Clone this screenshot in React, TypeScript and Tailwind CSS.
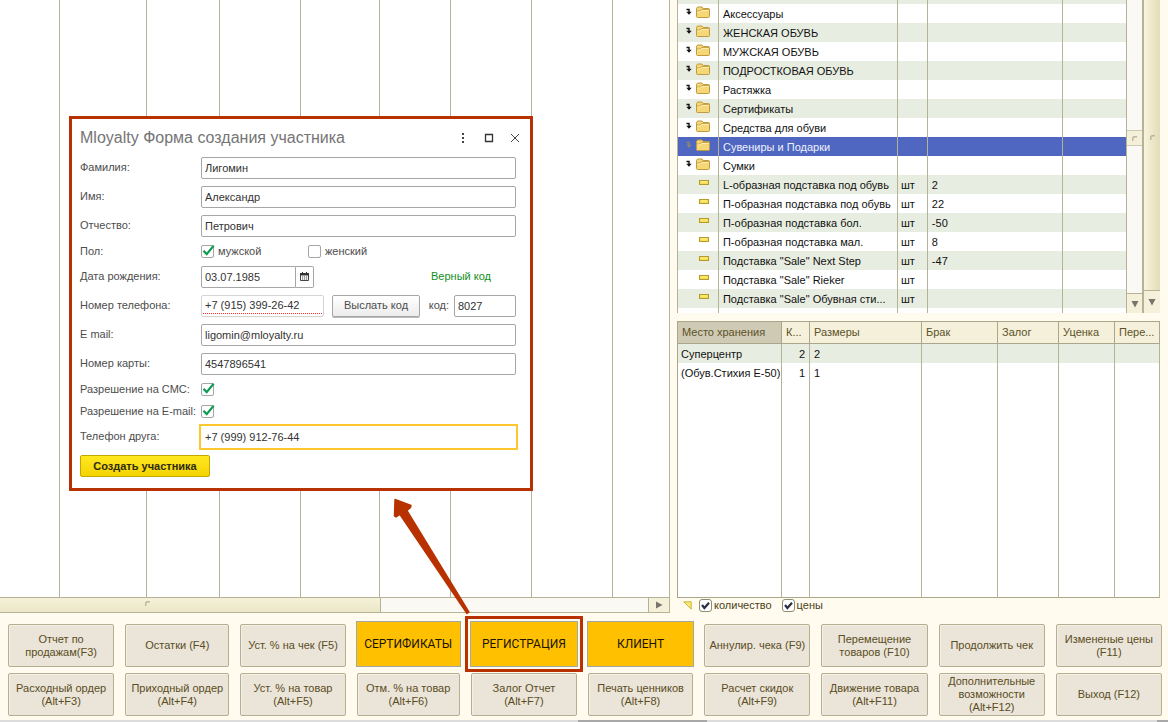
import type { ReactNode } from "react";
import { clsx } from "clsx";

type Product = {
  name: string;
  folder?: boolean;
  selected?: boolean;
  unit?: string;
  qty?: string;
};

const products: Product[] = [
  { name: "Аксессуары", folder: true },
  { name: "ЖЕНСКАЯ ОБУВЬ", folder: true },
  { name: "МУЖСКАЯ ОБУВЬ", folder: true },
  { name: "ПОДРОСТКОВАЯ ОБУВЬ", folder: true },
  { name: "Растяжка", folder: true },
  { name: "Сертификаты", folder: true },
  { name: "Средства для обуви", folder: true },
  { name: "Сувениры и Подарки", folder: true, selected: true },
  { name: "Сумки", folder: true },
  { name: "L-образная подставка под обувь", unit: "шт", qty: "2" },
  { name: "П-образная подставка под обувь", unit: "шт", qty: "22" },
  { name: "П-образная подставка бол.", unit: "шт", qty: "-50" },
  { name: "П-образная подставка мал.", unit: "шт", qty: "8" },
  { name: 'Подставка "Sale" Next Step', unit: "шт", qty: "-47" },
  { name: 'Подставка "Sale" Rieker', unit: "шт" },
  { name: 'Подставка "Sale" Обувная сти...', unit: "шт" },
];

const stockHead = ["Место хранения", "К...", "Размеры", "Брак", "Залог", "Уценка", "Пере..."];

const stock = [
  { place: "Суперцентр", count: "2", sizes: "2" },
  { place: "(Обув.Стихия Е-50)", count: "1", sizes: "1" },
];

type Action = { lines: string[]; accent?: boolean; marked?: boolean };

const actions: Action[] = [
  { lines: ["Отчет по", "продажам(F3)"] },
  { lines: ["Остатки (F4)"] },
  { lines: ["Уст. % на чек (F5)"] },
  { lines: ["СЕРТИФИКАТЫ"], accent: true },
  { lines: ["РЕГИСТРАЦИЯ"], accent: true, marked: true },
  { lines: ["КЛИЕНТ"], accent: true },
  { lines: ["Аннулир. чека (F9)"] },
  { lines: ["Перемещение", "товаров (F10)"] },
  { lines: ["Продолжить чек"] },
  { lines: ["Измененые цены", "(F11)"] },
  { lines: ["Расходный ордер", "(Alt+F3)"] },
  { lines: ["Приходный ордер", "(Alt+F4)"] },
  { lines: ["Уст. % на товар", "(Alt+F5)"] },
  { lines: ["Отм. % на товар", "(Alt+F6)"] },
  { lines: ["Залог Отчет", "(Alt+F7)"] },
  { lines: ["Печать ценников", "(Alt+F8)"] },
  { lines: ["Расчет скидок", "(Alt+F9)"] },
  { lines: ["Движение товара", "(Alt+F11)"] },
  { lines: ["Дополнительные", "возможности", "(Alt+F12)"] },
  { lines: ["Выход (F12)"] },
];

const FIELD =
  "h-[22px] min-w-0 rounded-[2px] border border-[#a6a6a6] bg-white px-[3px] text-[11px] text-[#333] outline-none";

const CELL = "border-r border-[#b5b296] p-0 pt-0.5 leading-[17px] whitespace-nowrap";

function FolderIcon({ dim }: { dim?: boolean }) {
  return (
    <svg width="26" height="15" viewBox="0 0 26 15" className="-mt-1 ml-[7px] block" aria-hidden>
      <path
        d="M1.500 5.500h2.500v3"
        fill="none"
        stroke={dim ? "#8d8676" : "#111"}
        strokeWidth="1.4"
      />
      <path d="M1.300 7.800h5.400L4 10.800z" fill={dim ? "#8d8676" : "#111"} />
      <path
        d="M11.5 4.5l1-1.5h4.5l1.2 1.5h5.3q1 0 1 1v7q0 1-1 1h-11q-1 0-1-1z"
        fill="#f6d778"
        stroke="#c09a3e"
        strokeWidth="1"
      />
      <path d="M12 7h3l1.4-1.5H24" fill="none" stroke="#c9a54c" strokeWidth="1" />
      <path d="M12.5 8h3l1.3-1.5H23.5" fill="none" stroke="#fdeeb0" strokeWidth="1" />
    </svg>
  );
}

function ItemIcon() {
  return (
    <svg width="10" height="5" viewBox="0 0 10 5" className="-mt-1 ml-[21px] block" aria-hidden>
      <rect x="0.5" y="0.5" width="9" height="4" fill="#f7dd4c" stroke="#b79a2c" />
      <path d="M2 2h6" stroke="#fdf3a0" />
    </svg>
  );
}

function Arrow({ dir }: { dir: "down" | "right" }) {
  return (
    <svg width="8" height="8" viewBox="0 0 8 8" aria-hidden>
      <path d={dir === "down" ? "M0.5 1h7L4 7.5z" : "M1 0.5v7L7.5 4z"} fill="#77756b" />
    </svg>
  );
}

function Grip() {
  return (
    <svg width="5" height="5" viewBox="0 0 5 5" aria-hidden>
      <path d="M0.8 5V2.5q0-1.7 1.7-1.7H5" fill="none" stroke="#b9b59a" strokeWidth="1.4" />
    </svg>
  );
}

function ProductTable() {
  return (
    <table className="min-w-0 flex-1 table-fixed border-collapse border-l border-[#b5b296] bg-white text-[11px] text-[#111]">
      <colgroup>
        <col className="w-[41px]" />
        <col className="w-[179px]" />
        <col className="w-[30px]" />
        <col className="w-[136px]" />
        <col className="w-[64px]" />
      </colgroup>
      <tbody>
        <tr className="h-1 bg-[#e8ede1]">
          {[0, 1, 2, 3, 4].map((i) => (
            <td key={i} className="border-r border-[#b5b296] p-0" />
          ))}
        </tr>
        {products.map((p, i) => (
          <tr
            key={p.name}
            className={clsx(
              "h-[19px]",
              p.selected ? "bg-[#4f67c0] text-[#eef1ff]" : i % 2 ? "bg-[#e8ede1]" : "bg-white"
            )}
          >
            <td className="border-r border-[#b5b296] p-0">
              {p.folder ? <FolderIcon dim={p.selected} /> : <ItemIcon />}
            </td>
            <td className={clsx(CELL, "pl-1")}>{p.name}</td>
            <td className={clsx(CELL, "pl-[3px]")}>{p.unit}</td>
            <td className={clsx(CELL, "pl-1")}>{p.qty}</td>
            <td className={CELL} />
          </tr>
        ))}
        <tr className="h-[5px]">
          {[0, 1, 2, 3, 4].map((i) => (
            <td key={i} className="border-r border-[#b5b296] p-0" />
          ))}
        </tr>
      </tbody>
    </table>
  );
}

function StockTable() {
  return (
    <table className="h-full w-full table-fixed border-collapse border border-[#a9a68a] bg-white text-[11px] text-[#111]">
      <colgroup>
        <col className="w-[104px]" />
        <col className="w-[28px]" />
        <col className="w-[112px]" />
        <col className="w-[76px]" />
        <col className="w-[61px]" />
        <col className="w-[56px]" />
        <col />
      </colgroup>
      <thead>
        <tr className="h-[22px] text-left text-[#5b5029]">
          {stockHead.map((h, i) => (
            <th
              key={h}
              className={clsx(
                "border border-[#a9a68a] p-0 pl-1 font-normal whitespace-nowrap",
                i === 0 ? "bg-[#cfcab3]" : "bg-[#f4f0da]"
              )}
            >
              {h}
            </th>
          ))}
        </tr>
      </thead>
      <tbody>
        {stock.map((s, i) => (
          <tr key={s.place} className={clsx("h-[19px]", i === 0 && "bg-[#e8ede1]")}>
            <td className={clsx(CELL, "pl-[3px]")}>{s.place}</td>
            <td className={clsx(CELL, "pr-1 text-right")}>{s.count}</td>
            <td className={clsx(CELL, "pl-1")}>{s.sizes}</td>
            {[3, 4, 5, 6].map((c) => (
              <td key={c} className={CELL} />
            ))}
          </tr>
        ))}
        <tr>
          {stockHead.map((h) => (
            <td key={h} className={CELL} />
          ))}
        </tr>
      </tbody>
    </table>
  );
}

function ReceiptGrid() {
  return (
    <section className="flex min-w-0 flex-1 flex-col border-r border-[#b5b296]">
      <div className="grid flex-1 grid-cols-[60fr_87fr_73fr_81fr_80fr_71fr_81fr_81fr_56fr] divide-x divide-[#b5b296] bg-white">
        {[0, 1, 2, 3, 4, 5, 6, 7, 8].map((c) => (
          <div key={c} />
        ))}
      </div>
      <div className="flex h-4 border-y border-[#b5b296] bg-[#faf9f3]">
        <div className="flex w-[57%] items-center justify-center border-r border-[#b5b296] bg-linear-to-b from-[#f6f2da] to-[#ebe6c6]">
          <div className="-mt-1 w-[90px]">
            <Grip />
          </div>
        </div>
        <div className="flex-1" />
        <button
          type="button"
          aria-label="Прокрутить вправо"
          className="flex w-[21px] items-center justify-center border-l border-[#b5b296] bg-[#f4f0da]"
        >
          <Arrow dir="right" />
        </button>
      </div>
    </section>
  );
}

function GreenCheck({ id, children }: { id: string; children?: ReactNode }) {
  return (
    <span className="flex items-center gap-1">
      <span className="relative flex">
        <input
          id={id}
          type="checkbox"
          defaultChecked={id !== "female"}
          className="peer size-[13px] appearance-none rounded-[2px] border border-[#a6a6a6] bg-white"
        />
        <svg
          width="14"
          height="14"
          viewBox="0 0 14 14"
          className="pointer-events-none absolute -top-px left-0 hidden peer-checked:block"
          aria-hidden
        >
          <path d="M2.5 6.8l3.2 3.4 7-8.6" fill="none" stroke="#0b9a50" strokeWidth="2.2" />
        </svg>
      </span>
      {children}
    </span>
  );
}

function DarkCheck({ id, label }: { id: string; label: string }) {
  return (
    <span className="flex items-center">
      <span className="relative flex">
        <input
          id={id}
          type="checkbox"
          defaultChecked
          className="peer size-[13px] appearance-none rounded-[3px] border border-[#8f8c72] bg-white"
        />
        <svg
          width="13"
          height="13"
          viewBox="0 0 13 13"
          className="pointer-events-none absolute top-0 left-0 hidden peer-checked:block"
          aria-hidden
        >
          <path d="M3 6l2.4 3L10 3.8" fill="none" stroke="#2c2f45" strokeWidth="2.2" />
        </svg>
      </span>
      <label htmlFor={id} className="pl-0.5">
        {label}
      </label>
    </span>
  );
}

function Row({
  id,
  label,
  compact,
  children,
}: {
  id?: string;
  label: string;
  compact?: boolean;
  children: ReactNode;
}) {
  return (
    <div className={clsx("flex items-center", compact ? "h-[22px]" : "h-[29px]")}>
      <label htmlFor={id} className="w-[121px] shrink-0 whitespace-nowrap">
        {label}
      </label>
      <div className="flex min-w-0 flex-1 items-center">{children}</div>
    </div>
  );
}

function MemberDialog() {
  return (
    <form
      role="dialog"
      aria-labelledby="member-title"
      className="absolute top-[116px] left-[69px] w-[464px] border-3 border-[#b83200] bg-white pr-[14px] pb-[7px] pl-2 text-[11px] text-[#4d4d4d]"
    >
      <div className="flex h-[34px] items-center justify-between pt-1">
        <h1 id="member-title" className="text-[16px] text-[#757575]">
          Mloyalty Форма создания участника
        </h1>
        <div className="-mr-[5px] flex items-center gap-[14px]">
          <button type="button" aria-label="Меню">
            <svg width="12" height="12" viewBox="0 0 12 12" fill="#444" aria-hidden>
              <path d="M5 1h2v2H5zM5 5h2v2H5zM5 9h2v2H5z" />
            </svg>
          </button>
          <button type="button" aria-label="Развернуть">
            <svg width="12" height="12" viewBox="0 0 12 12" fill="none" stroke="#333" aria-hidden>
              <path d="M2.5 2.500h7v7h-7z" strokeWidth="1.3" />
            </svg>
          </button>
          <button type="button" aria-label="Закрыть">
            <svg width="12" height="12" viewBox="0 0 12 12" fill="none" stroke="#444" aria-hidden>
              <path d="M2 2l8 8M10 2l-8 8" />
            </svg>
          </button>
        </div>
      </div>

      <Row id="surname" label="Фамилия:">
        <input id="surname" defaultValue="Лигомин" className={clsx(FIELD, "flex-1")} />
      </Row>
      <Row id="name" label="Имя:">
        <input id="name" defaultValue="Александр" className={clsx(FIELD, "flex-1")} />
      </Row>
      <Row id="patronymic" label="Отчество:">
        <input id="patronymic" defaultValue="Петрович" className={clsx(FIELD, "flex-1")} />
      </Row>
      <Row id="male" label="Пол:" compact>
        <div className="w-[107px]">
          <GreenCheck id="male">
            <label htmlFor="male">мужской</label>
          </GreenCheck>
        </div>
        <GreenCheck id="female">
          <label htmlFor="female">женский</label>
        </GreenCheck>
      </Row>
      <Row id="birthday" label="Дата рождения:">
        <input
          id="birthday"
          defaultValue="03.07.1985"
          className={clsx(FIELD, "w-[95px] rounded-r-none")}
        />
        <button
          type="button"
          aria-label="Календарь"
          className="flex h-[22px] w-[18px] items-center justify-center rounded-r-[2px] border border-l-0 border-[#a6a6a6]"
        >
          <svg width="9" height="9" viewBox="0 0 9 9" aria-hidden>
            <path d="M0.5 1.5h8v7h-8z" fill="#fff" stroke="#444" />
            <path d="M0 1h9v2.5H0zM2 0h1v1H2zM6 0h1v1H6z" fill="#333" />
            <path d="M2 5h1.2M4 5h1.2M6 5h1.2M2 7h1.2M4 7h1.2M6 7h1.2" stroke="#444" />
          </svg>
        </button>
        <output className="ml-auto pr-[25px] text-[#15901c]">Верный код</output>
      </Row>
      <Row id="phone" label="Номер телефона:">
        <span className="flex h-[22px] w-[123px] rounded-[2px] border border-[#d4d4d4] px-px pb-0.5">
          <span className="flex flex-1 border-b border-dotted border-b-[#ff2a2a]">
            <input
              id="phone"
              defaultValue="+7 (915) 399-26-42"
              className="w-full min-w-0 pt-0.5 pl-0.5 text-[11px] text-[#333] outline-none"
            />
          </span>
        </span>
        <button
          type="button"
          className="ml-2 h-[22px] w-[88px] rounded-[2px] border border-[#a6a6a6] bg-linear-to-b from-white to-[#ececec] shadow-[0_1px_0_#bbb]"
        >
          Выслать код
        </button>
        <label htmlFor="code" className="ml-auto pr-[5px]">
          код:
        </label>
        <input id="code" defaultValue="8027" className={clsx(FIELD, "w-[62px]")} />
      </Row>
      <Row id="email" label="E mail:">
        <input id="email" defaultValue="ligomin@mloyalty.ru" className={clsx(FIELD, "flex-1")} />
      </Row>
      <Row id="card" label="Номер карты:">
        <input id="card" defaultValue="4547896541" className={clsx(FIELD, "flex-1")} />
      </Row>
      <Row id="allow-sms" label="Разрешение на СМС:" compact>
        <GreenCheck id="allow-sms" />
      </Row>
      <Row id="allow-email" label="Разрешение на E-mail:" compact>
        <GreenCheck id="allow-email" />
      </Row>
      <Row id="friend" label="Телефон друга:">
        <input
          id="friend"
          defaultValue="+7 (999) 912-76-44"
          className="-mx-0.5 h-[26px] min-w-0 flex-1 border-2 border-[#fcc82d] bg-white px-1 text-[11px] text-[#333] outline-none"
        />
      </Row>
      <div className="flex h-[30px] items-center">
        <button
          type="button"
          className="h-[22px] w-[130px] rounded-[2px] border border-[#c0a800] bg-linear-to-b from-[#ffe81f] to-[#f3d400] font-bold text-[#2e2a10]"
        >
          Создать участника
        </button>
      </div>
    </form>
  );
}

function ActionButton({ lines, accent, marked }: Action) {
  return (
    <div className={clsx("relative flex", accent && "-mx-px -mt-[3px]")}>
      <button
        type="button"
        className={clsx(
          "flex-1 border whitespace-nowrap",
          accent
            ? "border-[#a6a6a6] bg-[#ffc000] font-['Roboto',sans-serif] text-[12px] text-[#1a1400]"
            : "rounded-[2px] border-[#b3b091] bg-[#eae4d9] text-[11px] leading-[13px] text-[#5a4d22] shadow-[inset_1px_1px_0_#f4f0e6]"
        )}
      >
        {lines.map((line) => (
          <span key={line} className="block">
            {line}
          </span>
        ))}
      </button>
      {marked && (
        <span className="pointer-events-none absolute -inset-[5px] border-3 border-[#b83200]" />
      )}
    </div>
  );
}

export default function App() {
  return (
    <div className="relative flex min-h-screen flex-col bg-[#fffbee] font-['Liberation_Sans',Arial,sans-serif]">
      <main className="flex flex-1">
        <ReceiptGrid />

        <section className="flex w-[498px] shrink-0 flex-col pr-2 pl-[7px]">
          <div className="flex">
            <ProductTable />
            <div className="flex w-[17px] flex-col border-r-2 border-[#b5b296] bg-[#faf9f5]">
              <div className="h-[130px]" />
              <div className="flex h-4 items-center justify-center border-y border-[#cfcbb0] bg-[#f4f0da]">
                <Grip />
              </div>
              <div className="flex-1" />
              <button
                type="button"
                aria-label="Прокрутить список вниз"
                className="flex h-5 items-center justify-center border-t border-[#b5b296] bg-[#f4f0da]"
              >
                <Arrow dir="down" />
              </button>
            </div>
            <div className="flex w-4 flex-col bg-linear-to-r from-[#f8f4de] to-[#e3dcb8]">
              <div className="flex flex-1 items-center justify-center border-b border-[#b5b296] pb-4">
                <Grip />
              </div>
              <button
                type="button"
                aria-label="Прокрутить окно вниз"
                className="flex h-[22px] items-center justify-center bg-[#f4f0da]"
              >
                <Arrow dir="down" />
              </button>
            </div>
          </div>

          <div className="mt-2 grid flex-1">
            <StockTable />
          </div>

          <div className="flex h-[15px] items-center text-[11px] text-[#4b4220]">
            <svg width="9" height="9" viewBox="0 0 9 9" className="mr-[7px] ml-[6px]" aria-hidden>
              <path d="M0.8 0.8h7.4v7.4z" fill="#f7ea78" stroke="#c9b53a" />
            </svg>
            <DarkCheck id="show-count" label="количество" />
            <span className="w-[10px]" />
            <DarkCheck id="show-prices" label="цены" />
          </div>
        </section>
      </main>

      <footer>
        <div className="grid auto-rows-[43px] grid-cols-[106fr_104fr_105fr_103fr_106fr_105fr_106fr_106fr_106fr_106fr] gap-x-[11px] gap-y-[6px] pt-[11px] pr-[6px] pb-1 pl-2">
          {actions.map((a) => (
            <ActionButton key={a.lines.join(" ")} {...a} />
          ))}
        </div>
        <div className="flex h-0.5 bg-[#dcdcdc]">
          <div className="ml-[49.5%] w-[11%] bg-[#a8a8a8]" />
          <div className="ml-auto w-[11px] bg-[#a8a8a8]" />
        </div>
      </footer>

      <MemberDialog />

      <svg
        width="80"
        height="118"
        viewBox="0 0 80 118"
        className="pointer-events-none absolute top-[498px] left-[392px]"
        aria-hidden
      >
        <path
          d="M3 1.500L19 7.500L18.500 9.500L15 12.500L77 114L75 115.500L8 16.500L4 19L2.500 18z"
          fill="#b83200"
          stroke="#b83200"
          strokeWidth="1.4"
          strokeLinejoin="round"
        />
      </svg>
    </div>
  );
}
